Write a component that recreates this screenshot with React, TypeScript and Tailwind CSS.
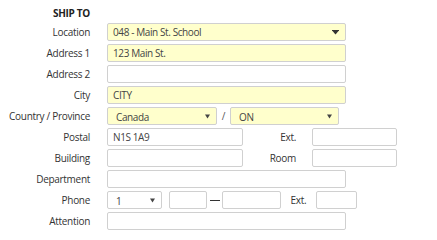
import React from "react";

const font = { fontFamily: '"Open Sans", "Liberation Sans", sans-serif' };

function Label({ children }: { children: React.ReactNode }) {
  return (
    <div className="w-[90px] shrink-0 whitespace-nowrap text-right text-[10px] tracking-[-0.3px] leading-[18px] text-[#333]">
      {children}
    </div>
  );
}

function Box({
  w,
  yellow,
  text,
  select,
  bigArrow,
}: {
  w: string;
  yellow?: boolean;
  text?: string;
  select?: boolean;
  bigArrow?: boolean;
}) {
  return (
    <div
      className={`${w} h-[18px] shrink-0 rounded-[2px] border border-[#d0d0d0] ${
        yellow ? "bg-[#ffffcc]" : "bg-white"
      } flex items-center justify-between ${select && !bigArrow ? "pl-[8px] pr-[6px]" : "pl-[5px] pr-[6px]"}`}
    >
      <span className={`text-[10px] tracking-[-0.4px] text-[#444] ${select && !bigArrow ? "pt-[2px]" : ""}`}>{text}</span>
      {select &&
        (bigArrow ? (
          <svg width="7" height="5" viewBox="0 0 7 5">
            <rect x="0" y="0" width="7" height="1" fill="#333" />
            <path d="M0.5 1 L6.5 1 L3.5 4.5 Z" fill="#333" />
          </svg>
        ) : (
          <svg width="5" height="5" viewBox="0 0 5 5">
            <path d="M0 0.5 L5 0.5 L2.5 4.5 Z" fill="#444" />
          </svg>
        ))}
    </div>
  );
}

function Row({ label, children }: { label: string; children: React.ReactNode }) {
  return (
    <div className="flex items-center h-[18px] mt-[3px]">
      <Label>{label}</Label>
      <div className="ml-[17px] flex items-center">{children}</div>
    </div>
  );
}

export default function App() {
  return (
    <div className="w-[437px] h-[240px] bg-white pt-[7px]" style={font}>
      <div className="flex h-[13px] items-center">
        <div className="w-[90px] text-right text-[10px] tracking-[-0.3px] font-bold text-[#222] leading-[13px]">SHIP TO</div>
      </div>
      <Row label="Location">
        <Box w="w-[239px]" yellow select bigArrow text="048 - Main St. School" />
      </Row>
      <Row label="Address 1">
        <Box w="w-[239px]" yellow text="123 Main St." />
      </Row>
      <Row label="Address 2">
        <Box w="w-[239px]" />
      </Row>
      <Row label="City">
        <Box w="w-[239px]" yellow text="CITY" />
      </Row>
      <Row label="Country / Province">
        <Box w="w-[110px]" yellow select text="Canada" />
        <span className="w-[13px] text-center text-[10px] text-[#555]">/</span>
        <Box w="w-[109px]" yellow select text="ON" />
      </Row>
      <Row label="Postal">
        <Box w="w-[136px]" text="N1S 1A9" />
        <div className="w-[69px] pr-[16px] text-right text-[10px] tracking-[-0.3px] text-[#333]">Ext.</div>
        <Box w="w-[85px]" />
      </Row>
      <Row label="Building">
        <Box w="w-[136px]" />
        <div className="w-[69px] pr-[16px] text-right text-[10px] tracking-[-0.3px] text-[#333]">Room</div>
        <Box w="w-[85px]" />
      </Row>
      <Row label="Department">
        <Box w="w-[239px]" />
      </Row>
      <Row label="Phone">
        <Box w="w-[55px]" select text="1" />
        <div className="w-[7px]" />
        <Box w="w-[38px]" />
        <div className="w-[15px] flex justify-center">
          <div className="w-[10px] h-px bg-[#333]" />
        </div>
        <Box w="w-[59px]" />
        <div className="w-[35px] text-center text-[10px] tracking-[-0.3px] text-[#333]">Ext.</div>
        <Box w="w-[41px]" />
      </Row>
      <Row label="Attention">
        <Box w="w-[239px]" />
      </Row>
    </div>
  );
}
